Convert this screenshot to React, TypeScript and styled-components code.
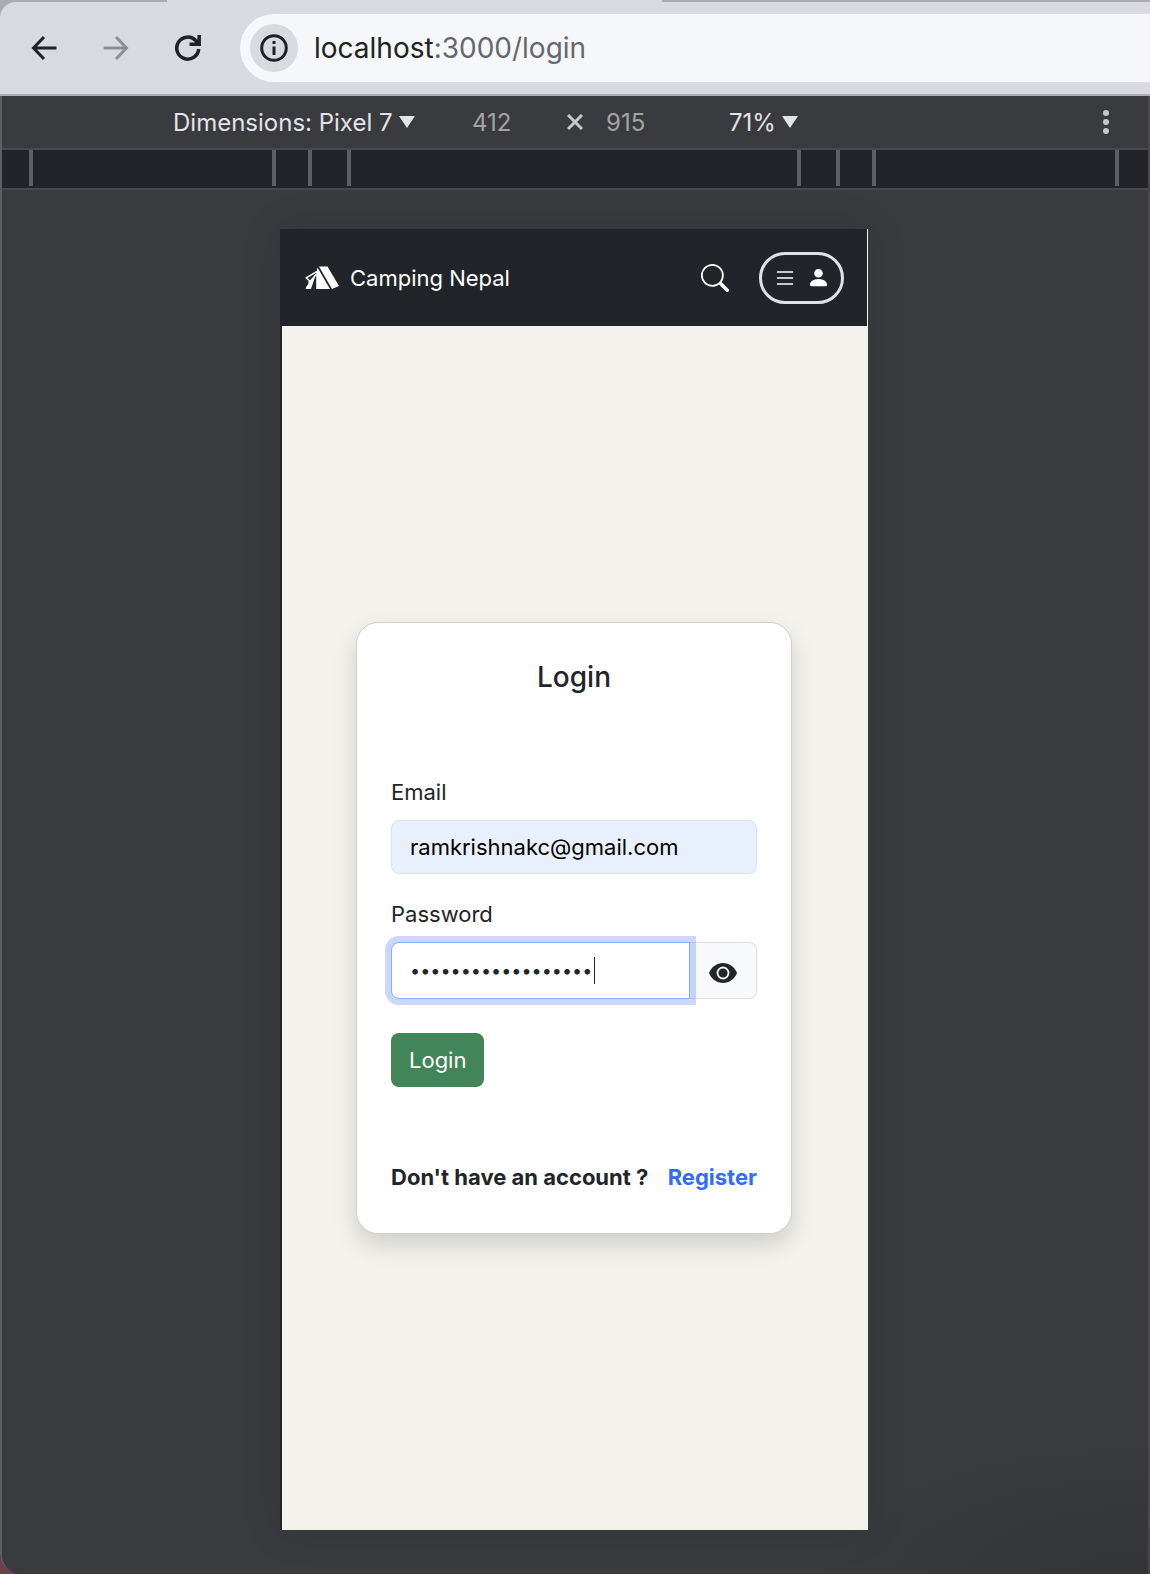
import React from "react";
import styled, { createGlobalStyle } from "styled-components";
import { BsList, BsPersonFill, BsSearch } from "react-icons/bs";

const GlobalStyle = createGlobalStyle`
  *, *::before, *::after { box-sizing: border-box; }
  body {
    margin: 0;
    background: #6d4148;
    font-family: Inter, "Liberation Sans", sans-serif;
    color: #212529;
  }
  button, input, select { font: inherit; color: inherit; }
`;

const BrowserWindow = styled.div`
  display: flex;
  flex-direction: column;
  min-height: 100vh;
  overflow: hidden;
  border-bottom-left-radius: 20px;
  background: #3a3b3f;
`;

const TabStrip = styled.div`
  padding-top: 2px;
  background: linear-gradient(90deg, #a8aab8 167px, #d9dae0 167px, #d9dae0 662px, #a8aab8 662px);
`;

const BrowserBar = styled.header`
  display: flex;
  align-items: center;
  height: 94px;
  padding-left: 24px;
  border-bottom: 2px solid #acaeb6;
  border-top-left-radius: 16px;
  background: #d9dae0;
`;

const NavButtons = styled.nav`
  display: flex;
  gap: 32px;
  margin-right: 32px;
`;

const NavButton = styled.button`
  display: flex;
  align-items: center;
  justify-content: center;
  width: 40px;
  height: 40px;
  padding: 0;
  border: 0;
  background: none;
  color: #202124;
  &:disabled { color: #8d8e92; }
`;

const AddressBar = styled.div`
  display: flex;
  flex: 1;
  align-items: center;
  gap: 16px;
  height: 68px;
  padding-left: 10px;
  border-radius: 34px 0 0 34px;
  background: #f6f7fa;
`;

const SiteInfo = styled.button`
  display: flex;
  align-items: center;
  justify-content: center;
  width: 48px;
  height: 48px;
  padding: 0;
  border: 0;
  border-radius: 50%;
  background: #d9dae0;
  color: #202124;
`;

const Url = styled.div`
  color: #65686c;
  font-size: 28px;
  line-height: 36px;
  white-space: nowrap;
  outline: none;
`;

const UrlHost = styled.span`
  color: #202124;
`;

const DevTools = styled.section`
  display: flex;
  flex: 1;
  flex-direction: column;
  border-right: 2px solid #47484c;
  border-left: 2px solid #5e5f63;
  border-bottom-left-radius: 20px;
`;

const DeviceBar = styled.div`
  display: flex;
  align-items: center;
  height: 54px;
  padding: 0 32px 0 171px;
  border-bottom: 2px solid #48494d;
  color: #e3e3e8;
  font-size: 24px;
`;

const Picker = styled.label`
  display: flex;
  align-items: center;
  gap: 6px;
`;

const PickerSelect = styled.select`
  padding: 0;
  border: 0;
  appearance: none;
  background: none;
  outline: none;
`;

const Sizes = styled.div`
  display: flex;
  align-items: center;
  gap: 23px;
  margin: 0 51px 0 57px;
`;

const SizeInput = styled.input`
  width: 72px;
  padding: 0;
  border: 0;
  background: none;
  color: #a3a3a3;
`;

const MoreButton = styled.button`
  display: flex;
  margin-left: auto;
  padding: 0;
  border: 0;
  background: none;
  color: #c7c8cd;
`;

const Ruler = styled.div`
  display: flex;
  justify-content: center;
  height: 40px;
  padding: 0 2px 2px 0;
  border-bottom: 2px solid #48494d;
  background: #232429;
`;

const RulerSpan = styled.div<{ $width: number }>`
  width: ${(p) => p.$width}px;
  border-left: 4px solid #5f6065;
  &:last-child { border-right: 4px solid #5f6065; }
`;

const Stage = styled.div`
  display: flex;
  flex: 1;
  justify-content: center;
  padding: 39px 2px 44px 0;
  background: radial-gradient(ellipse 340px 130px at 100% 100%, #333437, transparent);
`;

const Phone = styled.div`
  display: flex;
  flex-direction: column;
  width: 100%;
  max-width: 588px;
  border-left: 2px solid #212529;
  background: #f3f2ed;
  box-shadow: 0 0 40px rgba(0, 0, 0, 0.1);
`;

const SiteHeader = styled.header`
  display: flex;
  align-items: center;
  height: 97px;
  padding: 0 23px;
  border-right: 1px solid #f3f2ed;
  background: #212529;
  color: #fff;
`;

const Brand = styled.a`
  display: flex;
  align-items: center;
  gap: 11px;
  color: inherit;
  font-size: 22px;
  text-decoration: none;
`;

const SearchButton = styled.button`
  display: flex;
  margin: 0 30px 0 auto;
  padding: 0;
  border: 0;
  background: none;
`;

const MenuButton = styled.button`
  display: flex;
  align-items: center;
  justify-content: center;
  gap: 10px;
  width: 85px;
  height: 52px;
  padding: 0;
  border: 3px solid #dee2e6;
  border-radius: 26px;
  background: none;
`;

const Main = styled.main`
  display: flex;
  flex: 1;
  align-items: center;
  justify-content: center;
  padding-right: 2px;
`;

const Card = styled.form`
  display: flex;
  flex-direction: column;
  width: 436px;
  padding: 34px 34px 39px;
  border: 1px solid #cfcfcd;
  border-radius: 22px;
  background: #fff;
  box-shadow: 0 11px 23px rgba(0, 0, 0, 0.15);
  font-size: 22px;
  line-height: 34px;
`;

const Title = styled.h1`
  margin: 0 0 78px;
  font-size: 28px;
  font-weight: 500;
  line-height: 40px;
  text-align: center;
`;

const Field = styled.div`
  display: flex;
  flex-direction: column;
  gap: 11px;
  margin-bottom: 23px;
`;

const TextInput = styled.input`
  width: 100%;
  height: 54px;
  padding: 0 18px;
  border: 1px solid #dee2e6;
  border-radius: 8px;
  background: #e8f0fe;
  color: #000;
`;

const InputGroup = styled.div`
  display: flex;
  height: 57px;
`;

const PasswordBox = styled.div`
  position: relative;
  z-index: 1;
  flex: 1;
`;

const PasswordInput = styled(TextInput)`
  height: 100%;
  border-color: #86b0fb;
  border-radius: 8px 0 0 8px;
  background: #fff;
  color: #212529;
  font-size: 18px;
  caret-color: transparent;
  outline: none;
  box-shadow: 0 0 0 6px rgba(13, 78, 253, 0.22);
`;

const Caret = styled.span`
  position: absolute;
  top: 15px;
  left: 203px;
  width: 1px;
  height: 27px;
  background: #212529;
`;

const RevealButton = styled.button`
  display: flex;
  align-items: center;
  justify-content: center;
  width: 67px;
  padding: 4px 0 0;
  border: 1px solid #dee2e6;
  border-left: 0;
  border-radius: 0 8px 8px 0;
  background: #f8f9fa;
`;

const SubmitButton = styled.button`
  align-self: flex-start;
  height: 54px;
  margin: 11px 0 73px;
  padding: 0 18px;
  border: 0;
  border-radius: 8px;
  background: #418558;
  color: #fff;
`;

const SignUp = styled.p`
  display: flex;
  justify-content: space-between;
  margin: 0;
  font-weight: 700;
  white-space: nowrap;
`;

const RegisterLink = styled.a`
  color: #316df6;
  text-decoration: none;
`;

const DownTriangle = () => (
  <svg width="16" height="12" viewBox="0 0 16 12" fill="currentColor" aria-hidden="true">
    <path d="M0 0h16L8 12z" />
  </svg>
);

const TentLogo = () => (
  <svg width="34" height="24" viewBox="0 0 34 24" fill="currentColor" aria-hidden="true">
    <path d="M14 .5h8.500L34 20l-7 3z" />
    <path d="M12.500 1.500 25 23H11.200V8z" />
    <path d="M12 5.500 1.200 11.800l3 2.700v3.500L1.500 22M11.200 8.500 4.500 16" fill="none" stroke="currentColor" strokeWidth="1.500" />
    <path d="m11 8-6 8-4.500 7H6z" />
  </svg>
);

const EyeIcon = () => (
  <svg width="28" height="20" viewBox="0 0 28 20" fill="currentColor" aria-hidden="true">
    <path d="M0 10C2.500 3.700 8 0 14 0s11.500 3.700 14 10c-2.500 6.300-8 10-14 10S2.500 16.300 0 10z" />
    <circle cx="14" cy="10" r="5.500" fill="none" stroke="#f8f9fa" strokeWidth="1.800" />
  </svg>
);

const rulerSpans = [243, 36, 39, 450, 39, 36, 247];

export default function App() {
  return (
    <BrowserWindow>
      <GlobalStyle />
      <TabStrip>
        <BrowserBar>
          <NavButtons aria-label="History">
            <NavButton aria-label="Back">
              <svg width="26" height="26" viewBox="0 0 26 26" fill="none" stroke="currentColor" strokeWidth="3">
                <path d="M25.500 13H3M13 2 2.500 13 13 24" />
              </svg>
            </NavButton>
            <NavButton aria-label="Forward" disabled>
              <svg width="26" height="26" viewBox="0 0 26 26" fill="none" stroke="currentColor" strokeWidth="3">
                <path d="M.5 13H23M13 2 23.500 13 13 24" />
              </svg>
            </NavButton>
            <NavButton aria-label="Reload">
              <svg width="26" height="26" viewBox="0 0 26 26" fill="none" stroke="currentColor" strokeWidth="3.500">
                <path d="M23.700 14a11 11 0 1 1-3-8.500l3 3.500M24.200 0v9.200H14.500" />
              </svg>
            </NavButton>
          </NavButtons>
          <AddressBar>
            <SiteInfo aria-label="View site information">
              <svg width="28" height="28" viewBox="0 0 28 28" fill="none" stroke="currentColor" strokeWidth="3">
                <circle cx="14" cy="14" r="12.300" />
                <path d="M14 12.500V21M14 7v3" />
              </svg>
            </SiteInfo>
            <Url role="textbox" aria-label="Address" tabIndex={0}>
              <UrlHost>localhost</UrlHost>:3000/login
            </Url>
          </AddressBar>
        </BrowserBar>
      </TabStrip>
      <DevTools>
        <DeviceBar>
          <Picker>
            <PickerSelect aria-label="Device">
              <option>Dimensions: Pixel 7</option>
            </PickerSelect>
            <DownTriangle />
          </Picker>
          <Sizes>
            <SizeInput aria-label="Width" defaultValue="412" />
            <svg width="16" height="16" viewBox="0 0 16 16" stroke="#c7c8cd" strokeWidth="3" aria-hidden="true">
              <path d="m1 1 14 14M15 1 1 15" />
            </svg>
            <SizeInput aria-label="Height" defaultValue="915" />
          </Sizes>
          <Picker>
            <PickerSelect aria-label="Zoom">
              <option>71%</option>
            </PickerSelect>
            <DownTriangle />
          </Picker>
          <MoreButton aria-label="More options">
            <svg width="20" height="26" viewBox="0 0 20 26" fill="currentColor">
              <circle cx="10" cy="4" r="3" />
              <circle cx="10" cy="13" r="3" />
              <circle cx="10" cy="22" r="3" />
            </svg>
          </MoreButton>
        </DeviceBar>
        <Ruler>
          {rulerSpans.map((width, i) => (
            <RulerSpan key={i} $width={width} />
          ))}
        </Ruler>
        <Stage>
          <Phone>
            <SiteHeader>
              <Brand href="#home">
                <TentLogo />
                Camping Nepal
              </Brand>
              <SearchButton aria-label="Search">
                <BsSearch size={28} />
              </SearchButton>
              <MenuButton aria-label="Account menu">
                <BsList size={24} />
                <BsPersonFill size={23} />
              </MenuButton>
            </SiteHeader>
            <Main>
              <Card onSubmit={(e) => e.preventDefault()}>
                <Title>Login</Title>
                <Field>
                  <label htmlFor="email">Email</label>
                  <TextInput id="email" type="email" defaultValue="ramkrishnakc@gmail.com" />
                </Field>
                <Field>
                  <label htmlFor="password">Password</label>
                  <InputGroup>
                    <PasswordBox>
                      <PasswordInput id="password" type="password" defaultValue="camping-nepal-2023" />
                      <Caret />
                    </PasswordBox>
                    <RevealButton type="button" aria-label="Show password">
                      <EyeIcon />
                    </RevealButton>
                  </InputGroup>
                </Field>
                <SubmitButton type="submit">Login</SubmitButton>
                <SignUp>
                  <span>Don't have an account ?</span>
                  <RegisterLink href="#register">Register</RegisterLink>
                </SignUp>
              </Card>
            </Main>
          </Phone>
        </Stage>
      </DevTools>
    </BrowserWindow>
  );
}
